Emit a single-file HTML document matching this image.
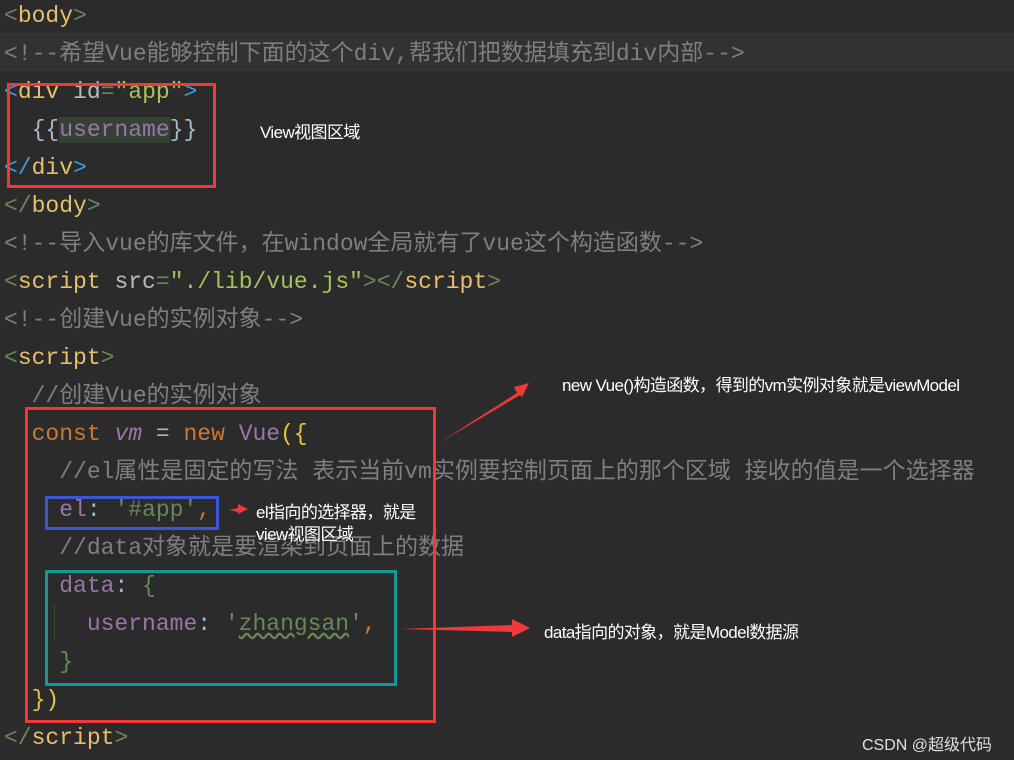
<!DOCTYPE html>
<html><head><meta charset="utf-8"><style>
body{margin:0;width:1014px;height:760px;background:#2b2b2b;overflow:hidden;position:relative}
.l{position:absolute;left:4px;height:38px;line-height:38px;font-family:"Liberation Mono","Noto Sans CJK SC",monospace;font-size:23px;white-space:pre;color:#a9b7c6}
.c{color:#7f7f7f}.g{color:#6a8759}.y{color:#e8bf6a}.b{color:#3d9be9}.p{color:#9876aa}.o{color:#cc7832}.s{color:#a5c25c}.gy{color:#bababa}.yb{color:#e4c43b}
.box{position:absolute;border:3px solid #f03a3a;box-sizing:border-box}
.a{position:absolute;font-family:"Liberation Sans","Noto Sans CJK SC",sans-serif;font-size:17px;color:#fff;white-space:nowrap;letter-spacing:-0.6px}
</style></head><body>
<div style="position:absolute;left:0;top:33px;width:1014px;height:38px;background:#323232"></div>
<div class="l" style="top:-3px"><span class="g">&lt;</span><span class="y">body</span><span class="g">&gt;</span></div>
<div class="l c" style="top:35px">&lt;!--希望Vue能够控制下面的这个div,帮我们把数据填充到div内部--&gt;</div>
<div class="l" style="top:73px"><span class="b">&lt;</span><span class="y">div</span> <span class="gy">id</span><span class="g">=</span><span class="s">"app"</span><span class="b">&gt;</span></div>
<div class="l" style="top:111px">  {{<span class="p" style="background:#344134">username</span>}}</div>
<div class="l" style="top:149px"><span class="b">&lt;/</span><span class="y">div</span><span class="b">&gt;</span></div>
<div class="l" style="top:187px"><span class="g">&lt;/</span><span class="y">body</span><span class="g">&gt;</span></div>
<div class="l c" style="top:225px">&lt;!--导入vue的库文件，在window全局就有了vue这个构造函数--&gt;</div>
<div class="l" style="top:263px"><span class="g">&lt;</span><span class="y">script</span> <span class="gy">src</span><span class="g">=</span><span class="s">"./lib/vue.js"</span><span class="g">&gt;&lt;/</span><span class="y">script</span><span class="g">&gt;</span></div>
<div class="l c" style="top:301px">&lt;!--创建Vue的实例对象--&gt;</div>
<div class="l" style="top:339px"><span class="g">&lt;</span><span class="y">script</span><span class="g">&gt;</span></div>
<div class="l c" style="top:377px">  //创建Vue的实例对象</div>
<div class="l" style="top:415px">  <span class="o">const</span> <span class="p" style="font-style:italic">vm</span> = <span class="o">new</span> <span class="p">Vue</span><span class="yb">({</span></div>
<div class="l c" style="top:453px">    //el属性是固定的写法 表示当前vm实例要控制页面上的那个区域 接收的值是一个选择器</div>
<div class="l" style="top:491px">    <span class="p">el</span>: <span class="g">'#app'</span><span class="o">,</span></div>
<div class="l c" style="top:529px">    //data对象就是要渲染到页面上的数据</div>
<div class="l" style="top:567px">    <span class="p">data</span>: <span class="g">{</span></div>
<div class="l" style="top:605px">      <span class="p">username</span>: <span class="g">'<span style="text-decoration:underline wavy #6a8759">zhangsan</span>'</span><span class="o">,</span></div>
<div class="l" style="top:643px">    <span class="g">}</span></div>
<div class="l" style="top:681px">  <span class="yb">})</span></div>
<div class="l" style="top:719px"><span class="g">&lt;/</span><span class="y">script</span><span class="g">&gt;</span></div>
<div style="position:absolute;left:54px;top:604px;width:1px;height:36px;background:#3b4a3b"></div>
<div class="box" style="left:7px;top:83px;width:209px;height:105px"></div>
<div class="box" style="left:25px;top:407px;width:411px;height:316px"></div>
<div class="box" style="left:45px;top:496px;width:174px;height:34px;border-color:#3a56d4"></div>
<div class="box" style="left:45px;top:570px;width:352px;height:116px;border-color:#0f9a9a"></div>
<svg width="1014" height="760" style="position:absolute;left:0;top:0">
<polygon points="439,443 517,393 514,387 529,383 522,397 520,395" fill="#f03a3a"/>
<polygon points="400,629 512,625 512,619 530,628 512,637 512,632" fill="#f03a3a"/>
<polygon points="229,510 238,508 238,504 248,509 238,514 238,512" fill="#f03a3a"/>
</svg>
<div class="a" style="left:562px;top:371px">new Vue()构造函数，得到的vm实例对象就是viewModel</div>
<div class="a" style="left:260px;top:118px">View视图区域</div>
<div class="a" style="left:256px;top:498px">el指向的选择器，就是</div>
<div class="a" style="left:256px;top:520px">view视图区域</div>
<div class="a" style="left:544px;top:618px">data指向的对象，就是Model数据源</div>
<div class="a" style="left:862px;top:731px;font-size:16px;color:#e0e0e0;letter-spacing:0">CSDN @超级代码</div>
</body></html>
